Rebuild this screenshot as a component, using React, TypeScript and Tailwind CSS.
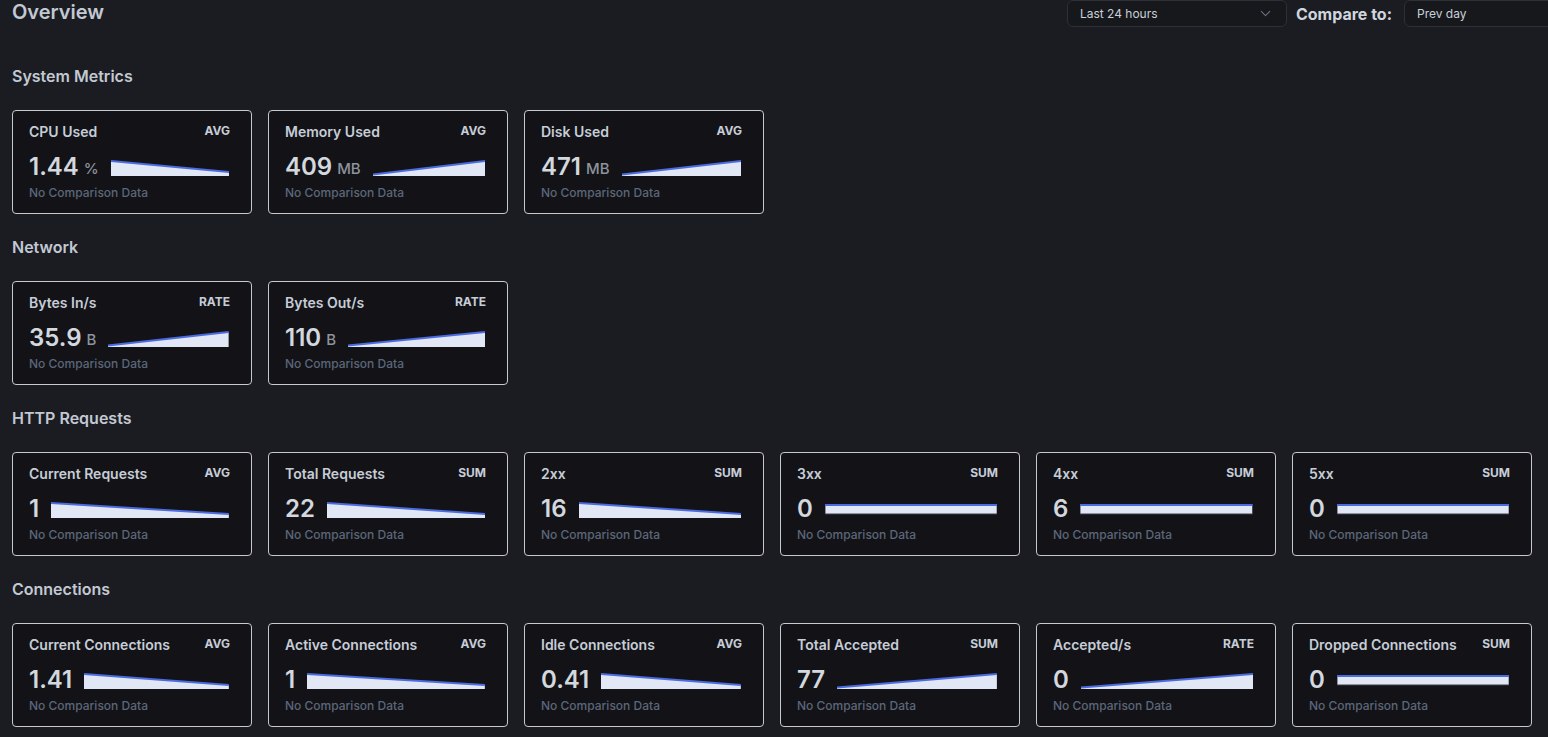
import { ChevronDown } from "lucide-react";

type Trend = "down" | "up" | "flat";
type Metric = { title: string; agg: string; value: string; unit?: string; trend: Trend };
type Section = { name: string; metrics: Metric[] };

const SECTIONS: Section[] = [
  {
    name: "System Metrics",
    metrics: [
      { title: "CPU Used", agg: "AVG", value: "1.44", unit: "%", trend: "down" },
      { title: "Memory Used", agg: "AVG", value: "409", unit: "MB", trend: "up" },
      { title: "Disk Used", agg: "AVG", value: "471", unit: "MB", trend: "up" },
    ],
  },
  {
    name: "Network",
    metrics: [
      { title: "Bytes In/s", agg: "RATE", value: "35.9", unit: "B", trend: "up" },
      { title: "Bytes Out/s", agg: "RATE", value: "110", unit: "B", trend: "up" },
    ],
  },
  {
    name: "HTTP Requests",
    metrics: [
      { title: "Current Requests", agg: "AVG", value: "1", trend: "down" },
      { title: "Total Requests", agg: "SUM", value: "22", trend: "down" },
      { title: "2xx", agg: "SUM", value: "16", trend: "down" },
      { title: "3xx", agg: "SUM", value: "0", trend: "flat" },
      { title: "4xx", agg: "SUM", value: "6", trend: "flat" },
      { title: "5xx", agg: "SUM", value: "0", trend: "flat" },
    ],
  },
  {
    name: "Connections",
    metrics: [
      { title: "Current Connections", agg: "AVG", value: "1.41", trend: "down" },
      { title: "Active Connections", agg: "AVG", value: "1", trend: "down" },
      { title: "Idle Connections", agg: "AVG", value: "0.41", trend: "down" },
      { title: "Total Accepted", agg: "SUM", value: "77", trend: "up" },
      { title: "Accepted/s", agg: "RATE", value: "0", trend: "up" },
      { title: "Dropped Connections", agg: "SUM", value: "0", trend: "flat" },
    ],
  },
];

// tiny sparkline, shapes only roughly follow the data
function Spark({ trend }: { trend: Trend }) {
  const [y0, y1] = trend === "down" ? [3, 14] : trend === "up" ? [16.5, 3] : [5, 5];
  const bottom = trend === "flat" ? 14 : 18;
  return (
    <svg viewBox="0 0 100 18" preserveAspectRatio="none" className="h-[18px] flex-1 min-w-0 mr-[1px]">
      <polygon points={`0,${y0} 100,${y1} 100,${bottom} 0,${bottom}`} fill="#e1e7f5" stroke={trend === "flat" ? "#3a3d46" : "none"} strokeWidth={1} vectorEffect="non-scaling-stroke" />
      <line x1={0} y1={y0} x2={100} y2={y1} stroke="#4b6be0" strokeWidth={2} vectorEffect="non-scaling-stroke" />
    </svg>
  );
}

function MetricCard({ m }: { m: Metric }) {
  return (
    <div className="w-[240px] h-[104px] shrink-0 rounded-[4px] border border-[#c6c9cf] bg-[#131317] pl-4 pr-[21px] pt-[10px] flex flex-col">
      <div className="flex items-center justify-between h-5">
        <span className="text-[14px] font-semibold text-[#c6cdd7]">{m.title}</span>
        <span className="text-[12px] font-bold text-[#c6cdd7]">{m.agg}</span>
      </div>
      <div className="flex items-center h-8 mt-[10px]">
        <span className="text-[24px] leading-8 font-semibold text-[#d3d8df]">{m.value}</span>
        {m.unit && <span className="ml-[5px] mt-[4px] text-[15px] font-medium text-[#8d949e]">{m.unit}</span>}
        <span className="w-3 shrink-0" />
        <Spark trend={m.trend} />
      </div>
      <div className="mt-[2px] text-[12px] leading-4 font-medium text-[#5b677a]">No Comparison Data</div>
    </div>
  );
}

export default function App() {
  return (
    <div className="min-h-screen w-full overflow-hidden bg-[#1b1c21] px-3 font-['Inter',sans-serif]">
      {/* Header */}
      <div className="flex items-start justify-between h-[27px]">
        <h1 className="text-[20px] leading-6 font-semibold text-[#c2c9d3]">Overview</h1>
        <div className="flex items-center -mr-6">
          <div className="w-[220px] h-[27px] rounded-md border border-[#2e3037] bg-[#17181c] pl-[12px] pr-[12px] flex items-center justify-between">
            <span className="text-[12px] text-[#c9d0d9]">Last 24 hours</span>
            <ChevronDown size={17} strokeWidth={1.5} className="text-[#6b7280]" />
          </div>
          <span className="ml-[9px] text-[16px] font-bold text-[#d0d6de]">Compare to:</span>
          <div className="ml-3 w-[156px] h-[27px] rounded-md border border-[#2e3037] bg-[#17181c] pl-[12px] flex items-center">
            <span className="text-[12px] text-[#c9d0d9]">Prev day</span>
          </div>
        </div>
      </div>

      <div className="mt-[37px] flex flex-col gap-[21px]">
        {SECTIONS.map((s) => (
          <section key={s.name}>
            <h2 className="text-[16px] leading-6 font-semibold text-[#c2c9d3] mb-[22px]">{s.name}</h2>
            <div className="flex gap-4">
              {s.metrics.map((m) => (
                <MetricCard key={m.title} m={m} />
              ))}
            </div>
          </section>
        ))}
      </div>
    </div>
  );
}
